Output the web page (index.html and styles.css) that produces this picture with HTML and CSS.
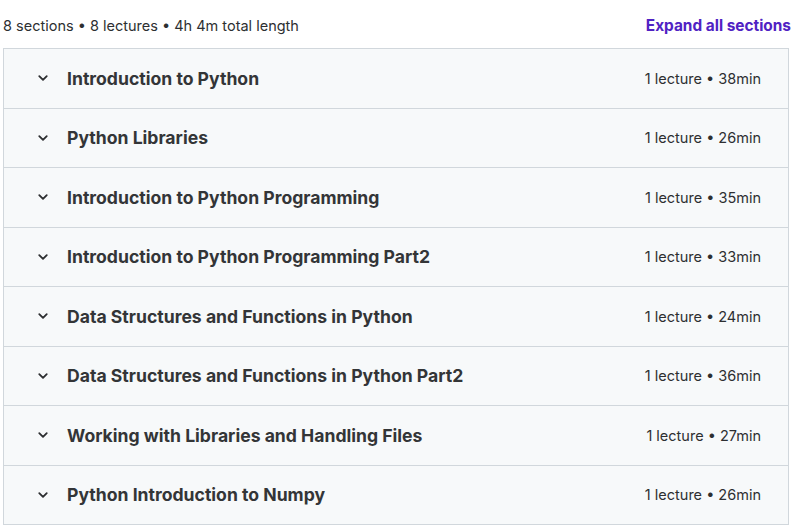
FILE: index.html
```html
<!DOCTYPE html>
<html>
<head>
  <title>Course content</title>
  <link rel="stylesheet" href="styles.css">
</head>
<body>
<div class="curriculum">
  <div class="summary">
    <span class="stats">8 sections • 8 lectures • 4h 4m total length</span>
    <button class="expand">Expand all sections</button>
  </div>

  <div class="sections">
    <div class="section">
      <svg class="chevron" viewBox="0 0 24 24"><path d="M7 9.5l5 5 5-5"/></svg>
      <span class="name">Introduction to Python</span>
      <span class="meta">1 lecture • 38min</span>
    </div>
    <div class="section">
      <svg class="chevron" viewBox="0 0 24 24"><path d="M7 9.5l5 5 5-5"/></svg>
      <span class="name">Python Libraries</span>
      <span class="meta">1 lecture • 26min</span>
    </div>
    <div class="section">
      <svg class="chevron" viewBox="0 0 24 24"><path d="M7 9.5l5 5 5-5"/></svg>
      <span class="name">Introduction to Python Programming</span>
      <span class="meta">1 lecture • 35min</span>
    </div>
    <div class="section">
      <svg class="chevron" viewBox="0 0 24 24"><path d="M7 9.5l5 5 5-5"/></svg>
      <span class="name">Introduction to Python Programming Part2</span>
      <span class="meta">1 lecture • 33min</span>
    </div>
    <div class="section">
      <svg class="chevron" viewBox="0 0 24 24"><path d="M7 9.5l5 5 5-5"/></svg>
      <span class="name">Data Structures and Functions in Python</span>
      <span class="meta">1 lecture • 24min</span>
    </div>
    <div class="section">
      <svg class="chevron" viewBox="0 0 24 24"><path d="M7 9.5l5 5 5-5"/></svg>
      <span class="name">Data Structures and Functions in Python Part2</span>
      <span class="meta">1 lecture • 36min</span>
    </div>
    <div class="section">
      <svg class="chevron" viewBox="0 0 24 24"><path d="M7 9.5l5 5 5-5"/></svg>
      <span class="name">Working with Libraries and Handling Files</span>
      <span class="meta">1 lecture • 27min</span>
    </div>
    <div class="section">
      <svg class="chevron" viewBox="0 0 24 24"><path d="M7 9.5l5 5 5-5"/></svg>
      <span class="name">Python Introduction to Numpy</span>
      <span class="meta">1 lecture • 26min</span>
    </div>
  </div>
</div>
</body>
</html>
```

FILE: styles.css
```css
body {
  margin: 0;
  background: #ffffff;
  font-family: Inter, "Noto Sans", sans-serif;
  color: #2d2f31;
}

.curriculum {
  width: 786px;
  padding-left: 3px;
}

.summary {
  display: flex;
  justify-content: space-between;
  align-items: center;
  height: 48px;
  padding-top: 3px;
  box-sizing: border-box;
}

.stats {
  font-size: 14.5px;
  color: #2d2f31;
}

.expand {
  border: none;
  background: none;
  padding: 0;
  margin-right: -2px;
  font-family: inherit;
  font-size: 15.4px;
  font-weight: 700;
  color: #5022c3;
  cursor: pointer;
}

.sections {
  border: 1px solid #d1d7dc;
}

.section {
  display: flex;
  align-items: center;
  height: 58.5px;
  padding: 0 27px 0 30px;
  background: #f7f9fa;
  border-bottom: 1px solid #d1d7dc;
  cursor: pointer;
}

.section:last-child {
  border-bottom: none;
}

.chevron {
  width: 18px;
  height: 18px;
  fill: none;
  stroke: #2d2f31;
  stroke-width: 2.4;
  stroke-linecap: round;
  stroke-linejoin: round;
  margin-right: 15px;
}

.name {
  flex: 1;
  font-size: 17.6px;
  font-weight: 700;
  color: #333537;
}

.meta {
  font-size: 14.5px;
}
```
